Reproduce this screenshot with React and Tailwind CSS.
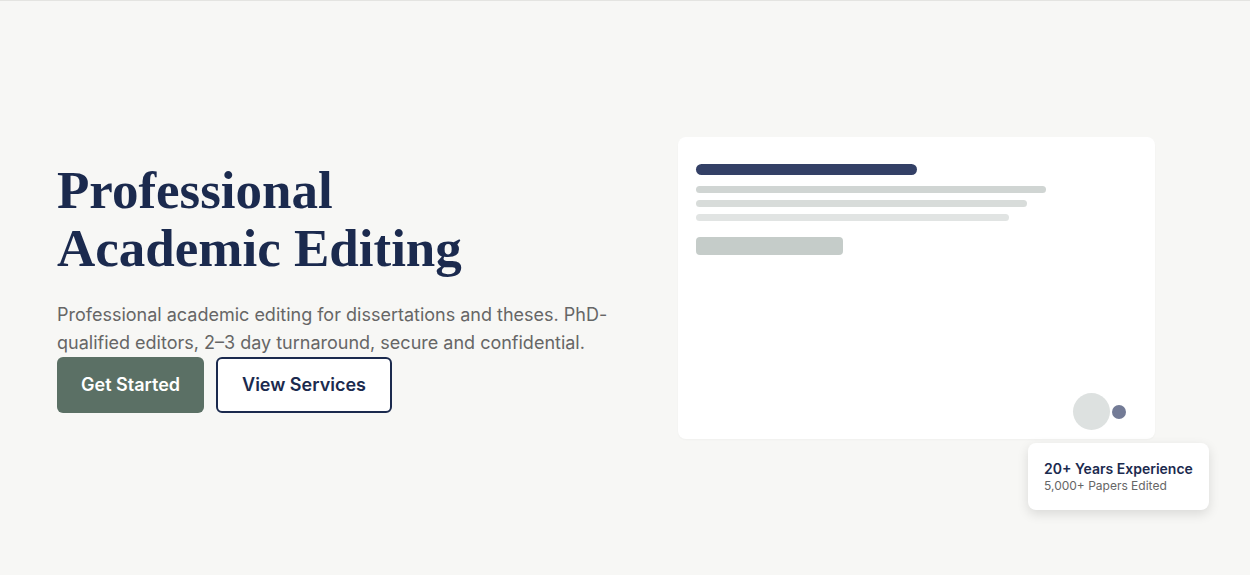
import React from "react";

const App = () => {
  return (
    <div className="min-h-[575px] bg-[#f7f7f5] border-t border-[#e4e4e1] flex items-center pl-[57px] pr-[95px]" style={{ fontFamily: "Inter, 'Liberation Sans', sans-serif" }}>
      <div className="w-[570px] pb-[3px]">
        <h1 className="text-[53px] leading-[58px] font-bold text-[#1b2a4e]" style={{ fontFamily: "'Liberation Serif', 'DejaVu Serif', serif" }}>
          Professional
          <br />
          Academic Editing
        </h1>
        <p className="mt-[24px] text-[18px] leading-[28px] text-[#666666] max-w-[560px]">
          Professional academic editing for dissertations and theses. PhD-qualified editors, 2–3 day turnaround, secure and confidential.
        </p>
        <div className="flex gap-3">
          <button className="h-[56px] px-6 rounded-md bg-[#5b7065] text-white text-[18px] font-semibold">
            Get Started
          </button>
          <button className="h-[56px] px-6 rounded-md border-2 border-[#1b2a4e] bg-white text-[#1b2a4e] text-[18px] font-semibold">
            View Services
          </button>
        </div>
      </div>
      <div className="ml-auto relative">
        <div className="w-[477px] h-[302px] bg-white rounded-lg shadow-[0_1px_2px_rgba(0,0,0,0.03)] px-[18px] pt-[27px] flex flex-col">
          <div className="h-[11px] w-[221px] rounded-full bg-[#334066]" />
          <div className="mt-[11px] h-[7px] w-[350px] rounded-full bg-[#d0d5d3]" />
          <div className="mt-[7px] h-[7px] w-[331px] rounded-full bg-[#d8dcda]" />
          <div className="mt-[7px] h-[7px] w-[313px] rounded-full bg-[#e1e4e3]" />
          <div className="mt-[16px] h-[18px] w-[147px] rounded-sm bg-[#c5ccc9]" />
          <div className="mt-auto mb-[9px] flex items-center justify-end pr-[11px]">
            <div className="w-[37px] h-[37px] rounded-full bg-[#dde1e0]" />
            <div className="w-[14px] h-[14px] rounded-full bg-[#737b96] ml-[2px]" />
          </div>
        </div>
        <div className="absolute -right-[54px] top-[306px] w-[181px] h-[67px] bg-white rounded-lg shadow-[0_4px_12px_rgba(0,0,0,0.12)] px-4 flex flex-col justify-center">
          <div className="text-[14px] leading-[18px] font-semibold text-[#1b2a4e]">20+ Years Experience</div>
          <div className="text-[12px] leading-[16px] text-[#666666]">5,000+ Papers Edited</div>
        </div>
      </div>
    </div>
  );
};

export default App;
